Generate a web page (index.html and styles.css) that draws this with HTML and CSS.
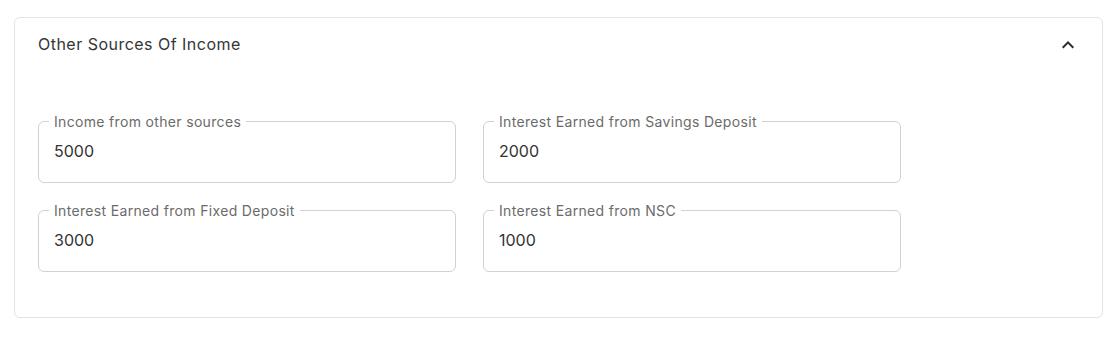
FILE: index.html
```html
<!DOCTYPE html>
<html>
<head>
<meta charset="utf-8">
<link rel="stylesheet" href="styles.css">
</head>
<body>
<section class="card">
  <header class="card-header">
    <h2 class="card-title">Other Sources Of Income</h2>
    <svg class="chevron" viewBox="0 0 24 24" width="24" height="24"><path d="M12 8l-6 6 1.41 1.41L12 10.83l4.59 4.58L18 14z" fill="#2b2b2b"/></svg>
  </header>
  <div class="card-body">
    <div class="grid">
      <fieldset class="field"><legend>Income from other sources</legend><div class="value">5000</div></fieldset>
      <fieldset class="field"><legend>Interest Earned from Savings Deposit</legend><div class="value">2000</div></fieldset>
      <fieldset class="field"><legend>Interest Earned from Fixed Deposit</legend><div class="value">3000</div></fieldset>
      <fieldset class="field"><legend>Interest Earned from NSC</legend><div class="value">1000</div></fieldset>
    </div>
  </div>
</section>
</body>
</html>
```
FILE: styles.css
```css
html, body { margin: 0; background: #fff; }
body { font-family: Inter, "Noto Sans", sans-serif; color: #333; }
.card {
  margin: 17px 15px 0 14px;
  border: 1px solid #e3e3e3;
  border-radius: 6px;
  background: #fff;
}
.card-header {
  height: 52px;
  padding: 0 22px 0 23px;
  display: flex;
  align-items: center;
  justify-content: space-between;
}
.card-title {
  margin: 0;
  font-size: 16px;
  font-weight: 400;
  letter-spacing: 0.48px;
  color: #353535;
}
.chevron { display: block; position: relative; top: 1px; }
.card-body {
  padding: 43px 23px 45px 23px;
}
.grid {
  display: grid;
  grid-template-columns: 418px 418px;
  column-gap: 27px;
  row-gap: 19px;
}
.field {
  margin: 0;
  border: 1px solid #d2d2d2;
  border-radius: 6px;
  padding: 11px 10px 21px 10px;
  min-width: 0;
}
.field legend {
  padding: 0 5px;
  font-size: 14px;
  line-height: 17px;
  letter-spacing: 0.33px;
  color: #6b6b6b;
}
.value {
  padding-left: 5px;
  font-size: 16px;
  line-height: 20px;
  color: #333;
}
```
